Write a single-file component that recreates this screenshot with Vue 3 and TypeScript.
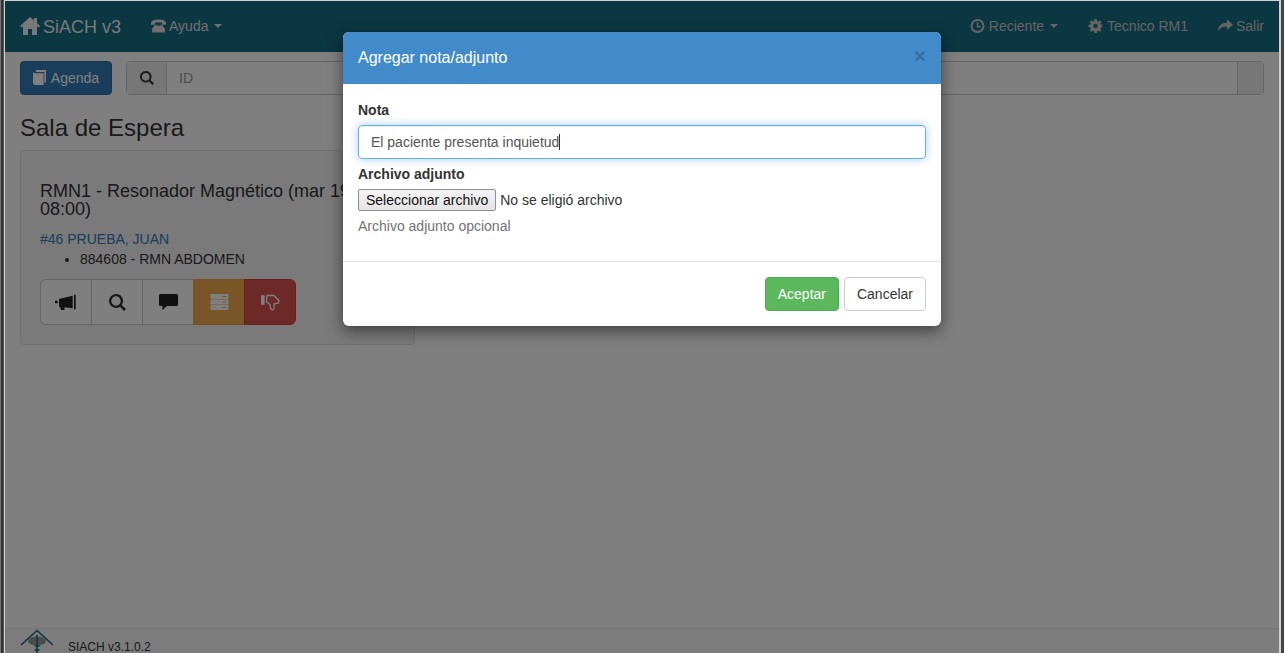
<script setup lang="ts">
const acciones = [
  { id: 'llamar', cls: '' },
  { id: 'ver', cls: '' },
  { id: 'nota', cls: '' },
  { id: 'servidor', cls: 'warning' },
  { id: 'rechazar', cls: 'danger' }
]
</script>

<template>
  <div class="frame">
    <div class="page">
      <nav class="navbar">
        <a class="brand">
          <svg class="ico-home" viewBox="0 0 20 18"><path d="M10 0 L14 3.5 V1 H17 V6.2 L20 9 L18.5 10.5 L17 9.2 V18 H12 V12 H8 V18 H3 V9.2 L1.5 10.5 L0 9 Z" /></svg>
          SiACH v3
        </a>
        <a class="nav-link help-link">
          <svg class="ico" viewBox="0 0 16 14"><path d="M8 0 C3 0 0 1.6 0 4 V5.6 H4.2 V3.6 C5.4 3 10.6 3 11.8 3.6 V5.6 H16 V4 C16 1.6 13 0 8 0 Z M5.2 4.8 V6.4 H10.8 V4.8 L14.8 10 V14 H1.2 V10 Z" /></svg>
          Ayuda <span class="caret"></span>
        </a>
        <div class="spacer"></div>
        <a class="nav-link dim">
          <svg class="ico" viewBox="0 0 14 14"><path d="M7 0 A7 7 0 1 0 7 14 A7 7 0 1 0 7 0 Z M7 2 A5 5 0 1 1 7 12 A5 5 0 1 1 7 2 Z M6.2 3.4 H7.8 V6.9 H10.4 V8.4 H6.2 Z" fill-rule="evenodd" /></svg>
          Reciente <span class="caret"></span>
        </a>
        <a class="nav-link dim">
          <svg class="ico" viewBox="0 0 14 14"><path d="M5.8 0 H8.2 L8.6 1.9 L9.9 2.4 L11.5 1.3 L13 2.9 L11.8 4.4 L12.3 5.6 L14 6 V8 L12.3 8.4 L11.8 9.7 L12.9 11.2 L11.3 12.8 L9.8 11.7 L8.6 12.2 L8.2 14 H5.8 L5.4 12.2 L4.1 11.7 L2.6 12.8 L1.1 11.2 L2.2 9.7 L1.7 8.4 L0 8 V6 L1.7 5.6 L2.2 4.3 L1.1 2.8 L2.7 1.3 L4.2 2.4 L5.4 1.9 Z M7 4.8 A2.2 2.2 0 1 0 7 9.2 A2.2 2.2 0 1 0 7 4.8 Z" fill-rule="evenodd" /></svg>
          Tecnico RM1
        </a>
        <a class="nav-link dim exit">
          <svg class="ico" viewBox="0 0 14 12"><path d="M8.4 0 L14 4.8 L8.4 9.6 V6.6 C4.6 6.4 2 7.4 0.2 11 C0 6 3 3 8.4 3 Z" /></svg>
          Salir
        </a>
      </nav>

      <main class="content">
        <div class="toolbar">
          <button class="btn-agenda">
            <svg class="ico-book" viewBox="0 0 13 15"><path d="M3 0 H13 V12 L11.4 13 V2 H3.4 C2.6 2 2.6 1.2 3 0 Z M1 2.6 C1 3 1.6 3.2 2.4 3.2 H10.6 V15 H2.4 C1.2 15 0 14.4 0 13 V3 C0 2.6 .4 2.4 1 2.6 Z" /></svg>
            Agenda
          </button>
          <div class="search">
            <span class="addon">
              <svg class="ico-search" viewBox="0 0 16 16"><path d="M6.6 0 A6.6 6.6 0 0 1 12 10.4 L16 14.2 L14.2 16 L10.3 12.1 A6.6 6.6 0 1 1 6.6 0 Z M6.6 2.2 A4.4 4.4 0 1 0 6.6 11 A4.4 4.4 0 1 0 6.6 2.2 Z" fill-rule="evenodd" /></svg>
            </span>
            <span class="search-input">ID</span>
            <span class="addon-end"></span>
          </div>
        </div>

        <h3 class="title">Sala de Espera</h3>

        <section class="well">
          <h4 class="well-title">RMN1 - Resonador Magnético (mar 19/06 08:00)</h4>
          <a class="patient">#46 PRUEBA, JUAN</a>
          <ul class="studies">
            <li>884608 - RMN ABDOMEN</li>
          </ul>
          <div class="btn-group">
            <button v-for="a in acciones" :key="a.id" class="act" :class="a.cls">
              <svg v-if="a.id === 'llamar'" class="act-ico horn" viewBox="0 0 21 16" fill="#222"><path d="M4 5 L17.7 1.7 V14.3 L4 12.7 Z M19 .7 H20.7 V15.3 H19 Z M0 6.7 H2.7 V9.3 H0 Z M5 12.7 H9.3 L9.6 16 H6 Z" /></svg>
              <svg v-else-if="a.id === 'ver'" class="act-ico ver" viewBox="0 0 16 16" fill="#333"><path d="M6.6 0 A6.6 6.6 0 0 1 12 10.4 L16 14.2 L14.2 16 L10.3 12.1 A6.6 6.6 0 1 1 6.6 0 Z M6.6 2.2 A4.4 4.4 0 1 0 6.6 11 A4.4 4.4 0 1 0 6.6 2.2 Z" fill-rule="evenodd" /></svg>
              <svg v-else-if="a.id === 'nota'" class="act-ico" viewBox="0 0 19 16" fill="#222"><path d="M1.6 0 H17.4 A1.6 1.6 0 0 1 19 1.6 V10.4 A1.6 1.6 0 0 1 17.4 12 H8 L3.4 16 V12 H1.6 A1.6 1.6 0 0 1 0 10.4 V1.6 A1.6 1.6 0 0 1 1.6 0 Z" /></svg>
              <svg v-else-if="a.id === 'servidor'" class="act-ico" viewBox="0 0 18 16" fill="#fff"><path fill-rule="evenodd" d="M1 0 H17 A1 1 0 0 1 18 1 V4 A1 1 0 0 1 17 5 H1 A1 1 0 0 1 0 4 V1 A1 1 0 0 1 1 0 Z M12 2 V3 H16 V2 Z M1 5.6 H17 A1 1 0 0 1 18 6.6 V9.4 A1 1 0 0 1 17 10.4 H1 A1 1 0 0 1 0 9.4 V6.6 A1 1 0 0 1 1 5.6 Z M12 7.5 V8.5 H16 V7.5 Z M1 11 H17 A1 1 0 0 1 18 12 V15 A1 1 0 0 1 17 16 H1 A1 1 0 0 1 0 15 V12 A1 1 0 0 1 1 11 Z M12 13 V14 H16 V13 Z" /></svg>
              <svg v-else class="act-ico thumb" viewBox="0 0 19 17" fill="none" stroke="#fff" stroke-width="1.3"><path d="M0.7 2 H3 V10 H0.7 Z" fill="#fff" /><path d="M6 1.5 H13 L18 6.5 L17.5 9 L13 10 V14 C13 16.5 10 16.5 9.5 14 L9 10.5 L5.5 8 Z" /></svg>
            </button>
          </div>
        </section>
      </main>

      <footer class="footer">
        <svg class="logo" viewBox="0 0 34 24">
          <ellipse cx="17" cy="12" rx="9" ry="4.5" fill="#999" />
          <path d="M1 16 L17 1.5 L33 16" fill="none" stroke="#176e85" stroke-width="1.6" />
          <path d="M17 6 V24 M14.5 17 H19.5 M14.5 21 H19.5" fill="none" stroke="#176e85" stroke-width="1.6" />
        </svg>
        <span class="version">SIACH v3.1.0.2</span>
      </footer>

      <div class="backdrop"></div>

      <div class="modal">
        <header class="modal-head">
          <span class="modal-title">Agregar nota/adjunto</span>
          <span class="close">×</span>
        </header>
        <div class="modal-body">
          <label class="lbl">Nota</label>
          <div class="field"><span class="field-text">El paciente presenta inquietud</span><span class="cursor"></span></div>
          <label class="lbl lbl-file">Archivo adjunto</label>
          <div class="file-row">
            <span class="file-btn">Seleccionar archivo</span>
            <span class="file-name">No se eligió archivo</span>
          </div>
          <p class="help">Archivo adjunto opcional</p>
        </div>
        <footer class="modal-foot">
          <button class="btn ok">Aceptar</button>
          <button class="btn cancel">Cancelar</button>
        </footer>
      </div>
    </div>
  </div>
</template>

<style>
html, body {
  margin: 0;
  height: 100%;
  overflow: hidden;
  background: #fff;
}
</style>

<style scoped>
.frame {
  box-sizing: border-box;
  width: 1284px;
  height: 653px;
  padding: 1px 5px 0;
  background: linear-gradient(to right, #777 0 1px, #333 1px 3px, #555 3px 4px, #d0d0d0 4px 1281px, #444 1281px);
  font-family: "Liberation Sans", Arial, sans-serif;
  font-size: 14px;
  color: #333;
  overflow: hidden;
}

.page {
  position: relative;
  height: 652px;
  display: flex;
  flex-direction: column;
  background: #fff;
  overflow: hidden;
}

.navbar {
  height: 51px;
  flex: none;
  display: flex;
  align-items: center;
  padding: 0 15px;
  background: #176e85;
  color: #e0e0e0;
}

.brand {
  display: flex;
  align-items: center;
  gap: 3px;
  padding-top: 2px;
  font-size: 18px;
  margin-right: 30px;
  color: #f0f0f0;
}

.ico-home { width: 20px; height: 18px; fill: currentColor; margin-top: -3px; }

.nav-link {
  display: flex;
  align-items: center;
  gap: 4px;
  margin-top: -1px;
  color: #e0e0e0;
}

.nav-link.help-link { gap: 3px; }
.nav-link.help-link .caret { margin-left: 3px; }
.nav-link.exit { gap: 3px; }

.nav-link.dim { color: #c8c8c8; }

.nav-link + .nav-link { margin-left: 30px; }

.ico { width: 15px; height: 14px; fill: currentColor; margin-top: -1px; }

.caret {
  display: inline-block;
  margin-left: 2px;
  border-top: 4px solid currentColor;
  border-left: 4px solid transparent;
  border-right: 4px solid transparent;
}

.spacer { flex: 1; }

.content {
  flex: 1;
  padding: 9px 15px 0;
}

.toolbar {
  display: flex;
  gap: 14px;
}

.btn-agenda {
  box-sizing: border-box;
  width: 92px;
  height: 34px;
  display: flex;
  align-items: center;
  justify-content: center;
  gap: 5px;
  border: 1px solid #2e6da4;
  border-radius: 4px;
  background: #337ab7;
  color: #fff;
  font: inherit;
}

.ico-book { width: 13px; height: 15px; fill: currentColor; margin-top: -2px; }

.search {
  flex: 1;
  box-sizing: border-box;
  height: 34px;
  display: flex;
  border: 1px solid #ccc;
  border-radius: 4px;
  background: #fff;
}

.addon {
  box-sizing: border-box;
  width: 40px;
  display: flex;
  align-items: center;
  justify-content: center;
  border-right: 1px solid #ccc;
  background: #eee;
}

.ico-search { width: 14px; height: 14px; fill: #333; }

.search-input {
  flex: 1;
  padding: 6px 12px;
  color: #999;
  line-height: 20px;
}

.addon-end {
  width: 25px;
  border-left: 1px solid #ccc;
  background: #eee;
  border-radius: 0 3px 3px 0;
}

.title {
  margin: 20px 0 9px;
  font-size: 24px;
  font-weight: 500;
  line-height: 26px;
  color: #333;
}

.well {
  box-sizing: border-box;
  width: 395px;
  min-height: 194px;
  padding: 19px;
  background: #f5f5f5;
  border: 1px solid #e3e3e3;
  border-radius: 4px;
}

.well-title {
  margin: 12px 0 11px;
  font-size: 18px;
  font-weight: 500;
  line-height: 18px;
  color: #333;
}

.patient {
  display: block;
  color: #337ab7;
  line-height: 20px;
}

.studies {
  margin: 0 0 10px;
  padding-left: 40px;
  line-height: 20px;
}

.btn-group { display: flex; }

.act {
  box-sizing: border-box;
  width: 52px;
  height: 46px;
  padding: 0;
  margin-left: -1px;
  display: flex;
  align-items: center;
  justify-content: center;
  background: #fff;
  border: 1px solid #ccc;
}

.act:first-child { margin-left: 0; border-radius: 6px 0 0 6px; }
.act:last-child { border-radius: 0 6px 6px 0; }

.act.warning { background: #f0ad4e; border-color: #eea236; }
.act.danger { background: #d9534f; border-color: #d43f3a; }

.act-ico { width: 19px; height: 16px; }
.act-ico.ver { width: 17px; height: 17px; }
.act-ico.horn { width: 21px; height: 16px; margin-left: -2px; }
.act-ico.thumb { height: 17px; }

.footer {
  position: absolute;
  left: 0;
  right: 0;
  bottom: 0;
  height: 24px;
  display: flex;
  align-items: flex-end;
  padding-left: 15px;
  background: #f8f8f8;
  border-top: 1px solid #eee;
}

.logo { width: 34px; height: 24px; flex: none; }

.version {
  margin-left: 14px;
  font-size: 12px;
  line-height: 14px;
  color: #333;
  margin-bottom: -1px;
}

.backdrop {
  position: absolute;
  inset: 0;
  background: rgba(0, 0, 0, .5);
}

.modal {
  position: absolute;
  left: 338px;
  top: 31px;
  width: 598px;
  height: 294px;
  display: flex;
  flex-direction: column;
  background: #fff;
  border-radius: 6px;
  box-shadow: 0 5px 15px rgba(0, 0, 0, .5);
  overflow: hidden;
}

.modal-head {
  height: 52px;
  flex: none;
  display: flex;
  align-items: center;
  justify-content: space-between;
  padding: 0 15px;
  background: #428bca;
  color: #fff;
}

.modal-title { font-size: 16px; }

.close {
  font-size: 21px;
  font-weight: 700;
  line-height: 1;
  color: #000;
  opacity: .2;
  margin-top: -5px;
}

.modal-body {
  flex: 1;
  padding: 16px 15px 0;
  border-bottom: 1px solid #e5e5e5;
}

.lbl {
  display: block;
  font-weight: 700;
  line-height: 20px;
  margin-bottom: 5px;
}

.lbl-file { margin: 5px 0 5px; }

.field {
  box-sizing: border-box;
  height: 34px;
  padding: 6px 12px;
  display: flex;
  align-items: center;
  border: 1px solid #66afe9;
  border-radius: 4px;
  box-shadow: inset 0 1px 1px rgba(0, 0, 0, .075), 0 0 8px rgba(102, 175, 233, .6);
  color: #555;
}

.cursor {
  width: 1px;
  height: 16px;
  background: #333;
}

.file-row {
  display: flex;
  align-items: center;
  height: 22px;
}

.file-btn {
  box-sizing: border-box;
  height: 22px;
  padding: 0 7px;
  line-height: 20px;
  color: #111;
  background: linear-gradient(#f4f4f4, #e4e4e4);
  border: 1px solid #8f8f8f;
  border-radius: 2px;
  margin-right: 4px;
}

.help {
  margin: 5px 0 0;
  color: #737373;
  line-height: 20px;
}

.modal-foot {
  height: 64px;
  flex: none;
  box-sizing: border-box;
  padding: 15px;
  display: flex;
  justify-content: flex-end;
  gap: 5px;
}

.btn {
  box-sizing: border-box;
  height: 34px;
  padding: 6px 12px;
  font: inherit;
  border: 1px solid;
  border-radius: 4px;
}

.btn.ok { background: #5cb85c; border-color: #4cae4c; color: #fff; }
.btn.cancel { background: #fff; border-color: #ccc; color: #333; }
</style>
